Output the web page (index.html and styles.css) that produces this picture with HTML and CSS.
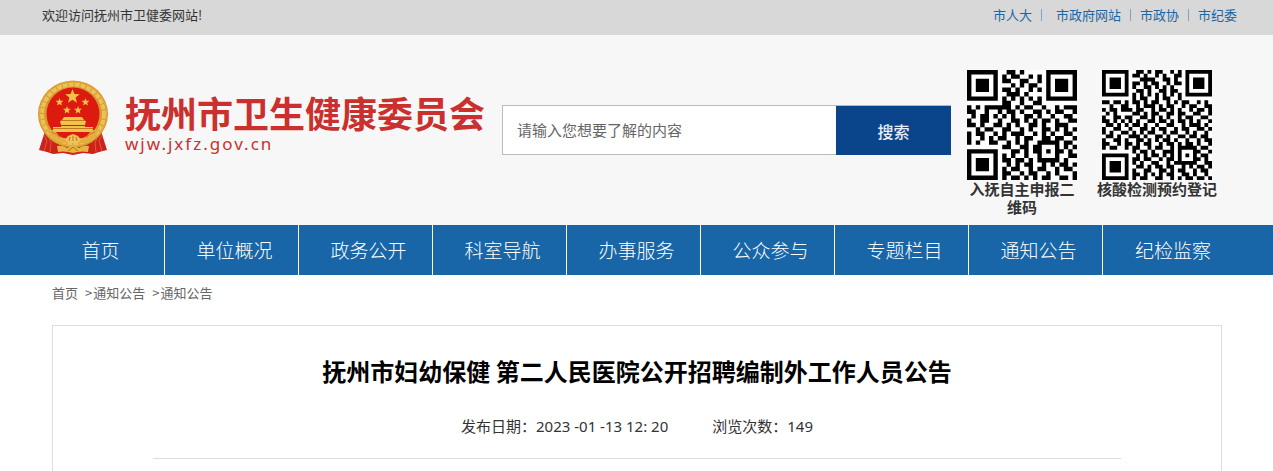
FILE: index.html
```html
<!DOCTYPE html>
<html lang="zh-CN">
<head>
<meta charset="utf-8">
<meta name="viewport" content="width=device-width, initial-scale=1">
<title>抚州市卫生健康委员会</title>
<link rel="stylesheet" href="styles.css">
</head>
<body>
<div class="topbar">
  <p class="welcome">欢迎访问抚州市卫健委网站!</p>
  <ul class="toplinks">
    <li><a href="#">市人大</a></li>
    <li class="wide"><a href="#">市政府网站</a></li>
    <li><a href="#">市政协</a></li>
    <li><a href="#">市纪委</a></li>
  </ul>
</div>
<header class="header">
  <a class="logo" href="#">
    <svg class="emblem" viewBox="0 0 70 76" aria-hidden="true">
      <path d="M8 48L1 70l8 2 6 2 10-1 10 2 10-2 10 1 6-2 8-2-7-22z" fill="#cb221a"/>
      <ellipse cx="35" cy="34" rx="35" ry="33.500" fill="#d79a2f"/>
      <ellipse cx="35" cy="34" rx="31" ry="29.500" fill="none" stroke="#ecc15a" stroke-width="4" stroke-dasharray="5 1"/>
      <ellipse cx="35" cy="34" rx="33.500" ry="32" fill="none" stroke="#e2ab40" stroke-width="1"/>
      <circle cx="35" cy="34" r="26.500" fill="#dc1a10"/>
      <g fill="#f3c24b">
        <path transform="translate(0 4)" d="M34.500 5l1.900 5 5.400.2-4.200 3.400 1.400 5.100-4.500-2.900-4.500 2.900 1.400-5.100-4.200-3.400 5.400-.2z"/>
        <path transform="translate(0 4)" d="M21.500 14l1 2.700 2.900.1-2.200 1.900.7 2.800-2.400-1.600-2.400 1.600.7-2.800-2.200-1.900 2.900-.1zM47.500 14l1 2.700 2.900.1-2.200 1.900.7 2.800-2.400-1.600-2.400 1.600.7-2.800-2.200-1.900 2.900-.1zM29 22l1 2.700 2.900.1-2.200 1.900.7 2.800-2.400-1.600-2.400 1.600.7-2.800-2.200-1.900 2.900-.1zM40 22l1 2.700 2.900.1-2.200 1.900.7 2.800-2.400-1.600-2.400 1.600.7-2.800-2.200-1.900 2.900-.1z"/>
        <path d="M26 37h18l2 3H24zM22 41h26l-1 4H23zM23 46h24v1h8v5H15v-5h8z"/>
      </g>
      <path d="M23 40.500h24M15 48.500h40" stroke="#c07c1e" fill="none"/>
      <path d="M9 49q9 1 12 7 8 5 14-1 6 6 14 1 3-6 12-7-3 10-11 13-9 3-15-1-6 4-15 1-8-3-11-13z" fill="#e4af40"/>
      <path d="M13 52q7 2 9 6M57 52q-7 2-9 6" fill="none" stroke="#bf7c22"/>
      <path d="M27 60l3-4 5-2 5 2 3 4-4 3h-8z" fill="#efc459"/>
      <path d="M31 61l1-4m3 4v-5m4 5l-1-4" fill="none" stroke="#b5761f"/>
      <path d="M19 66q6-1 10 2l6-3 6 3q4-3 10-2l-1 6q-6-1-10 0l-5 1-5-1q-5-1-10 0z" fill="#e8b542"/>
      <path d="M6 55l3 6-3 10M11 58l2 5-1 9M64 55l-3 6 3 10M59 58l-2 5 1 9" fill="none" stroke="#e8553c"/>
      <path d="M30 71l5-4 5 4" fill="none" stroke="#ae711c"/>
    </svg>
    <span class="brand">
      <span class="brand-name">抚州市卫生健康委员会</span>
      <span class="brand-url">wjw.jxfz.gov.cn</span>
    </span>
  </a>
  <form class="search">
    <input class="search-input" type="text" aria-label="搜索内容" placeholder="请输入您想要了解的内容">
    <button class="search-button" type="button">搜索</button>
  </form>
  <div class="codes">
    <figure class="code">
      <svg class="qr" viewBox="0 0 25 25" data-code="declare" role="img" aria-label="入抚自主申报二维码"></svg>
      <figcaption>入抚自主申报二维码</figcaption>
    </figure>
    <figure class="code code-wide">
      <svg class="qr" viewBox="0 0 29 29" data-code="booking" role="img" aria-label="核酸检测预约登记"></svg>
      <figcaption>核酸检测预约登记</figcaption>
    </figure>
  </div>
</header>
<nav class="nav">
  <a href="#">首页</a>
  <a href="#">单位概况</a>
  <a href="#">政务公开</a>
  <a href="#">科室导航</a>
  <a href="#">办事服务</a>
  <a href="#">公众参与</a>
  <a href="#">专题栏目</a>
  <a href="#">通知公告</a>
  <a href="#">纪检监察</a>
</nav>
<main class="main">
  <div class="crumbs">
    <a href="#">首页</a>
    <span class="crumb"><span>&gt;</span><a href="#">通知公告</a></span>
    <span class="crumb"><span>&gt;</span><a href="#">通知公告</a></span>
  </div>
  <article class="article">
    <h1 class="title">抚州市妇幼保健 第二人民医院公开招聘编制外工作人员公告</h1>
    <div class="meta">
      <span>发布日期：2023 -01 -13 12: 20</span>
      <span>浏览次数：149</span>
    </div>
  </article>
</main>
<script src="qr.js"></script>
</body>
</html>
```
FILE: styles.css
```css
* {
  box-sizing: border-box;
}

body {
  display: flex;
  flex-direction: column;
  min-height: 100vh;
  margin: 0;
  background: #fff;
  color: #333;
  font: 13px/20px "Noto Sans CJK SC", sans-serif;
}

a {
  color: inherit;
  text-decoration: none;
}

.topbar {
  display: flex;
  justify-content: space-between;
  padding: 5px 36px 10px 42px;
  background: #d8d8d8;
}

.welcome {
  margin: 0;
}

.toplinks {
  display: flex;
  margin: 0;
  padding: 0;
  list-style: none;
  color: #1866a7;
}

.toplinks li {
  display: flex;
  align-items: center;
}

.toplinks li + li::before {
  content: "";
  width: 1px;
  height: 12px;
  margin: 0 9px;
  background: #7fa3c6;
}

.toplinks .wide::before {
  margin-right: 14px;
}

.header {
  display: flex;
  align-items: flex-start;
  height: 190px;
  padding: 35px 56px 0 38px;
  background: #f7f7f7;
}

.logo {
  display: flex;
  flex: none;
  gap: 17px;
  padding-top: 10px;
  color: #c9302e;
}

.emblem {
  width: 70px;
  height: 76px;
}

.brand {
  display: flex;
  flex-direction: column;
  padding-top: 8px;
}

.brand-name {
  font-size: 36px;
  font-weight: 700;
  line-height: 48px;
}

.brand-url {
  font-family: "Noto Sans", sans-serif;
  font-size: 17px;
  line-height: 16px;
  letter-spacing: 2px;
}

.search {
  display: flex;
  flex: 1;
  height: 50px;
  margin: 35px 16px 0 17px;
}

.search-input {
  flex: 1;
  min-width: 0;
  padding: 0 14px;
  border: 1px solid #bbb;
  border-right: 0;
  background: #fff;
  font: inherit;
  font-size: 15px;
}

.search-input::placeholder {
  color: #666;
}

.search-button {
  width: 115px;
  padding: 0;
  border: 0;
  border-top: 1px solid #a9bbd2;
  background: #0a448b;
  color: #e8eff8;
  font: inherit;
  font-size: 16px;
  font-weight: 500;
}

.codes {
  display: flex;
  flex: none;
  gap: 20px;
}

.code {
  display: flex;
  flex-direction: column;
  align-items: center;
  width: 110px;
  margin: 0;
  font-size: 15px;
  font-weight: 700;
  line-height: 18px;
  text-align: center;
}

.code-wide {
  width: 120px;
}

.qr {
  width: 110px;
  height: 110px;
  background: #fff;
}

.nav {
  display: grid;
  grid-template-columns: repeat(9, 1fr);
  padding: 0 36px 0 31px;
  background: #1866a7;
  color: #fff;
  font-size: 19px;
  font-weight: 300;
  line-height: 50px;
  text-align: center;
}

.nav a {
  padding-left: 6px;
  border-right: 1px solid #fff;
}

.nav a:last-child {
  border-right: 0;
}

.main {
  display: flex;
  flex: 1;
  flex-direction: column;
  padding: 0 51px 0 52px;
}

.crumbs {
  display: flex;
  gap: 7px;
  padding: 8px 0 22px;
  color: #666;
}

.crumb {
  display: flex;
  gap: 1px;
}

.article {
  flex: 1;
  padding: 27px 100px 0;
  border: 1px solid #ddd;
  border-bottom: 0;
}

.title {
  margin: 0;
  color: #000;
  font-size: 24px;
  line-height: 36px;
  text-align: center;
}

.meta {
  display: flex;
  justify-content: center;
  gap: 44px;
  padding: 27px 0 22px;
  border-bottom: 1px solid #ddd;
  font-family: "Noto Sans", "Noto Sans CJK SC", sans-serif;
  font-size: 15px;
}
```
FILE: qr.js
```js
// Module maps: "#" is a dark cell.
const codes = {
  declare: [
    "#######..##.#.....#######",
    "#.....#.#.##..#.#.#.....#",
    "#.###.#.##..##..#.#.###.#",
    "#.###.#...#.#.##..#.###.#",
    "#.###.#.##.#..#.#.#.###.#",
    "#.....#..###.#....#.....#",
    "#######.#.#.#.#.#.#######",
    "........##..#..##........",
    "#.#.######.#.##..#..#.###",
    "##..#..#.##.#..##.#.##..#",
    ".#.##.#.#.#..##.#..#..##.",
    "#..##..#..##.#.#.##.#..##",
    "##.#..##.#.#..##.#..###..",
    "..#.##..##..#.#..##.#.#.#",
    "#.##..#.#.###..#.#.#..##.",
    "#..#.#.##..#.##..##.##..#",
    "#.#..##..#.#.#..#####.##.",
    "........##..##.##...#.#.#",
    "#######...##.#.##.#.##.#.",
    "#.....#.#.#..#..#...#..##",
    "#.###.#.##.##.#.#####.#..",
    "#.###.#..#.#.##..#.#.##.#",
    "#.###.#.#.##..#.##..#.##.",
    "#.....#.##..#.##..#.#...#",
    "#######.#.##.#.#.##..##.#"
  ],
  booking: [
    "#######..##.#.##..#.#.#######",
    "#.....#.##.#..#.#..##.#.....#",
    "#.###.#...####..##.#..#.###.#",
    "#.###.#.##.#.##..#.##.#.###.#",
    "#.###.#.#..##.#.#.#...#.###.#",
    "#.....#..##.#..##.##..#.....#",
    "#######.#.#.#.#.#.#.#.#######",
    "........#.##..#.##..#........",
    "##.##.#.##.#.##..#.#.##..#.#.",
    "..#..##..#.###.#.##..#.##..##",
    "#.##.###.##..#.##.#.#..#.##.#",
    ".#.#....##.#.##..##.##..##..#",
    "#..##.##..##.#.#.#..#.##..##.",
    "##.#.#.#.#..##.##.#.##.#.#..#",
    ".##.#.#.##.#..#..##..#.###.#.",
    "#..##..#..##.#.##..#.##..##.#",
    "#.#..##.#.#.##..#.##..#.#..#.",
    ".##.#..###.#..##.#..##.##.##.",
    "#..##.#..##.#.#.##.#..#..#.##",
    "##..#.##.#.##..#.##.#.##.#..#",
    "#.##..#.##..#.##..#.#####.##.",
    "........#.##.#..###.#...##..#",
    "#######..#.#.##.#.#.#.#.#.##.",
    "#.....#.##.##..#.##.#...##.#.",
    "#.###.#.#.#..##..#.######..##",
    "#.###.#..##.#.##.##..#.#.##.#",
    "#.###.#.#..##..##.#.##..#.##.",
    "#.....#.##.#.#.#.##..##.#..#.",
    "#######.#.##..##..#.#.##.##.#"
  ]
};

for (const svg of document.querySelectorAll("[data-code]")) {
  const path = document.createElementNS("http://www.w3.org/2000/svg", "path");
  let d = "";
  codes[svg.dataset.code].forEach((row, y) => {
    for (const run of row.matchAll(/#+/g)) {
      d += `M${run.index} ${y}h${run[0].length}v1h-${run[0].length}z`;
    }
  });
  path.setAttribute("d", d);
  svg.append(path);
}
```
